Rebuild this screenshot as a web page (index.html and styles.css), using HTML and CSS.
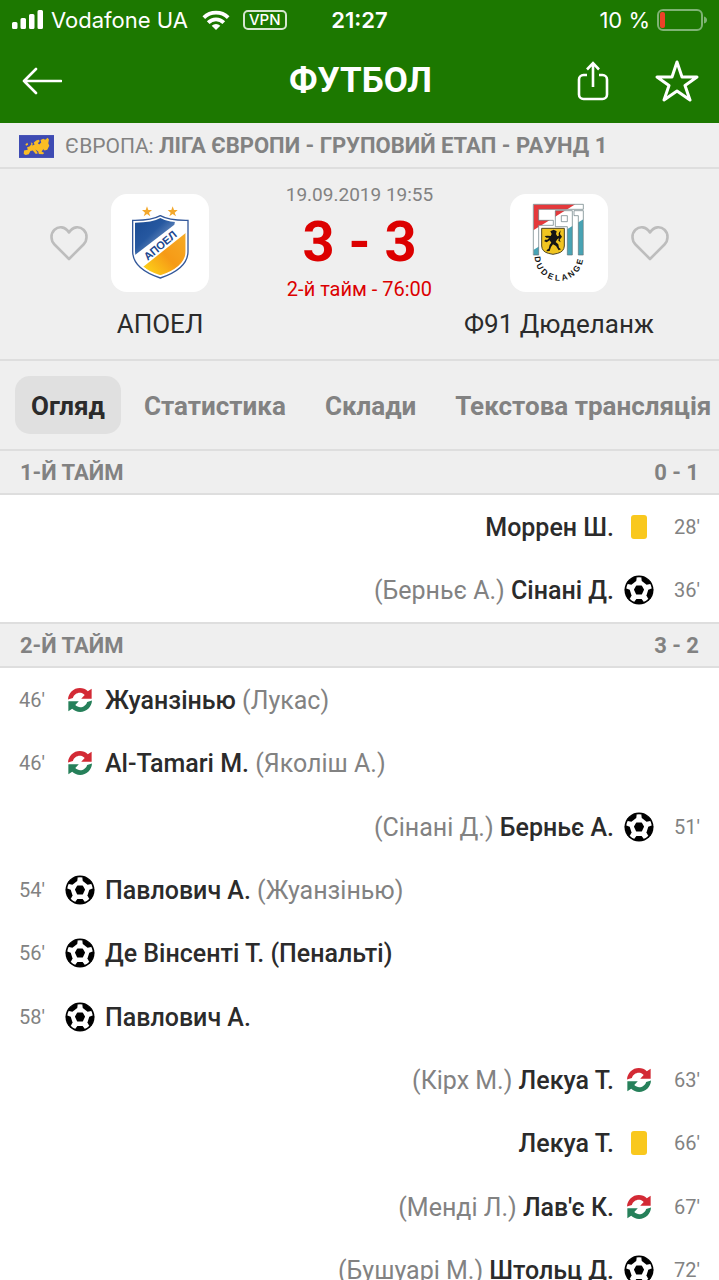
FILE: index.html
```html
<!DOCTYPE html>
<html lang="uk">
<head>
<meta charset="utf-8">
<meta name="viewport" content="width=device-width, initial-scale=1">
<title>Футбол</title>
<link rel="stylesheet" href="styles.css">
</head>
<body>
<svg class="sprite" aria-hidden="true">
  <symbol id="heart" viewBox="0 0 38 36">
    <path d="M19 34 L4.500 19.500 C.5 15.500 .5 8.500 4.500 4.800 C8.500 1 15 1.200 19 7.500 C23 1.200 29.500 1 33.500 4.800 C37.500 8.500 37.500 15.500 33.500 19.500 Z" fill="none" stroke="currentColor" stroke-width="2.600" stroke-linejoin="round"/>
  </symbol>
  <symbol id="ball" viewBox="-15 -15 30 30">
    <circle r="14.500"/>
    <circle r="12.800" fill="#fff"/>
    <path d="M-2.200 -3.800 H2.200 L4.200 -.3 L2.200 3.800 H-2.200 L-4.200 -.3 Z" stroke="#000" stroke-width="1.600" stroke-linejoin="round"/>
    <path d="M-2.600 9 H2.600 L4.600 11.600 L4 13.800 H-4 L-4.600 11.600 Z"/>
    <path d="M-3 8.800 H3 L5.400 11.400 L5 13.500 H-5 L-5.400 11.400 Z" transform="rotate(72)"/>
    <path d="M-3 8.800 H3 L5.400 11.400 L5 13.500 H-5 L-5.400 11.400 Z" transform="rotate(144)"/>
    <path d="M-3 8.800 H3 L5.400 11.400 L5 13.500 H-5 L-5.400 11.400 Z" transform="rotate(216)"/>
    <path d="M-3 8.800 H3 L5.400 11.400 L5 13.500 H-5 L-5.400 11.400 Z" transform="rotate(288)"/>
  </symbol>
  <symbol id="swap" viewBox="0 0 69 69">
    <path d="M0 33 C1 14 16 0 34 0 C43 0 51 3 57 9 L68 2 V31 H38 L48 20 C36 8 18 15 14 29 Z" fill="#d32a35"/>
    <path d="M0 33 C1 14 16 0 34 0 C43 0 51 3 57 9 L68 2 V31 H38 L48 20 C36 8 18 15 14 29 Z" fill="#26805a" transform="rotate(180 34.500 34.500)"/>
  </symbol>
  <symbol id="card" viewBox="0 0 16 24">
    <rect width="16" height="24" rx="3" fill="#f9c81e"/>
  </symbol>
</svg>

<header class="top">
  <div class="status">
    <div class="carrier">
      <svg class="signal" viewBox="0 0 32 20" aria-hidden="true"><path fill="#fff" d="M2 12h2a1.500 1.500 0 0 1 1.500 1.500v4A1.500 1.500 0 0 1 4 19H1.500A1.500 1.500 0 0 1 0 17.500v-4A1.500 1.500 0 0 1 1.500 12zM10 8h2.500A1.500 1.500 0 0 1 14 9.500v8a1.500 1.500 0 0 1-1.500 1.500H10a1.500 1.500 0 0 1-1.500-1.500v-8A1.500 1.500 0 0 1 10 8zM18.500 4H21a1.500 1.500 0 0 1 1.500 1.500v12A1.500 1.500 0 0 1 21 19h-2.500a1.500 1.500 0 0 1-1.500-1.500v-12A1.500 1.500 0 0 1 18.500 4zM27 0h2.500A1.500 1.500 0 0 1 31 1.500v16a1.500 1.500 0 0 1-1.500 1.500H27a1.500 1.500 0 0 1-1.500-1.500v-16A1.500 1.500 0 0 1 27 0z"/></svg>
      <span>Vodafone UA</span>
      <svg class="wifi" viewBox="0 0 28 20" aria-hidden="true"><path fill="#fff" d="M14 20l-4.300-4.300a6.300 6.300 0 0 1 8.600 0z"/><g fill="none" stroke="#fff" stroke-width="3.800"><path d="M1.800 7.600a17.500 17.500 0 0 1 24.400 0"/><path d="M6.200 12.600a11 11 0 0 1 15.600 0"/></g></svg>
      <span class="vpn">VPN</span>
    </div>
    <time class="clock">21:27</time>
    <div class="power">
      <span>10 %</span>
      <svg class="battery" viewBox="0 0 50 22" aria-hidden="true"><rect x="1" y="1" width="44" height="20" rx="5" fill="none" stroke="#7fb374" stroke-width="2"/><rect x="3" y="3" width="5" height="16" rx="2" fill="#ec4128"/><path d="M47 7.500q3 1 3 3.500t-3 3.500z" fill="#7fb374"/></svg>
    </div>
  </div>
  <div class="bar">
    <button class="icon-btn" aria-label="Назад"><svg class="back" viewBox="0 0 40 28"><path d="M39 14H2M14 2L2 14l12 12" fill="none" stroke="#fff" stroke-width="2.600" stroke-linecap="round" stroke-linejoin="round"/></svg></button>
    <h1>ФУТБОЛ</h1>
    <div class="actions">
      <button class="icon-btn" aria-label="Поділитися"><svg class="share" viewBox="0 0 32 40"><path d="M10 14H6.500A4.500 4.500 0 0 0 2 18.500v15A4.500 4.500 0 0 0 6.500 38h19a4.500 4.500 0 0 0 4.500-4.500v-15a4.500 4.500 0 0 0-4.500-4.500H22M16 26V3M10 8.500L16 2.200l6 6.300" fill="none" stroke="#fff" stroke-width="2.600"/></svg></button>
      <button class="icon-btn" aria-label="До обраного"><svg class="star" viewBox="0 0 44 42"><path d="M22 2L27 17H42L30 25.500L35 40L22 31L9 40L14 25.500L2 17H17Z" fill="none" stroke="#fff" stroke-width="3" stroke-linejoin="round"/></svg></button>
    </div>
  </div>
</header>

<main>
  <section class="league">
    <svg class="flag" viewBox="0 0 104 68" aria-hidden="true"><rect width="104" height="68" fill="#3e4bb3"/><path d="M15 46L26 44L24 36L31 34L37 27L35 21L41 25L39 31L46 29L44 22L51 16L58 14L62 18L56 24L60 28L66 22L64 15L72 11L78 14L85 8L89 13L87 24L90 32L84 44L76 46L72 42L67 49L75 53L71 57L59 56L57 49L49 43L56 54L50 56L41 46L34 47L29 57L20 59L14 56Z" fill="#fabd25"/><path d="M19 27l6-4 2 6-6 3z" fill="#fabd25"/></svg>
    <p>ЄВРОПА: <b>ЛІГА ЄВРОПИ - ГРУПОВИЙ ЕТАП - РАУНД 1</b></p>
  </section>

  <section class="match">
    <div class="team home">
      <button class="icon-btn fav" aria-label="Додати АПОЕЛ"><svg><use href="#heart"/></svg></button>
      <svg class="crest" viewBox="18 12 294 294" aria-hidden="true">
        <defs>
          <linearGradient id="blue" x1="0" y1="0" x2="1" y2="1"><stop offset="0" stop-color="#16468f"/><stop offset=".45" stop-color="#2658a0"/><stop offset=".75" stop-color="#7796c4"/></linearGradient>
          <linearGradient id="gold" x1="1" y1="0" x2="0" y2="1"><stop offset="0" stop-color="#f6ad28"/><stop offset=".5" stop-color="#f69a16"/><stop offset="1" stop-color="#ffe21a"/></linearGradient>
          <clipPath id="shield"><path d="M166 84Q143 98 90 98V184Q91 231 166 256Q241 231 242 184V98Q189 98 166 84Z"/></clipPath>
        </defs>
        <path d="M166 77Q140 92 83 91V185Q84 237 166 264Q248 237 249 185V91Q192 92 166 77Z" fill="#fff" stroke="#33589a" stroke-width="4"/>
        <g clip-path="url(#shield)"><path d="M80 70H215L208 104L85 199Z" fill="url(#blue)"/><path d="M115 230L250 123V270H166Z" fill="url(#gold)"/></g>
        <text class="crest-name" transform="translate(128 213) rotate(-40)">АПОЕЛ</text>
        <path d="M126 49L130 60L141 60L132 68L136 79L126 72L116 79L120 68L111 60L122 60Z" fill="#f3a82c"/>
        <path d="M203 49L207 60L218 60L209 68L213 79L203 72L193 79L197 68L188 60L199 60Z" fill="#f3a82c"/>
      </svg>
      <h2>АПОЕЛ</h2>
    </div>
    <div class="result">
      <time>19.09.2019 19:55</time>
      <strong>3 - 3</strong>
      <span>2-й тайм - 76:00</span>
    </div>
    <div class="team away">
      <svg class="crest" viewBox="18 12 294 294" aria-hidden="true">
        <defs>
          <clipPath id="f91"><path clip-rule="evenodd" d="M88 43H238V58H104V91H148V106H104V195H88ZM154 62H205V195H190V110H154ZM172 77V95H190V77ZM210 62H238V195H223V77H210Z"/></clipPath>
          <path id="arc" d="M92 199A73 73 0 0 0 238 199"/>
        </defs>
        <g clip-path="url(#f91)"><rect x="88" y="43" width="150" height="152" fill="#fff"/><path d="M88 43H214L88 121Z" fill="#e5383b"/><path d="M88 180L238 88V195H88Z" fill="#48a3b4"/></g>
        <path d="M88 43H238V58H104V91H148V106H104V195H88ZM154 62H205V195H190V110H154ZM172 77V95H190V77ZM210 62H238V195H223V77H210Z" fill="none" stroke="#5f7478" stroke-width="2"/>
        <path d="M113 115H181V168Q180 185 161 190L147 193L133 190Q114 185 113 168Z" fill="#f0c420" stroke="#4d4524" stroke-width="3"/>
        <path d="M139 124L149 119L158 124L156 132L160 139L169 136L170 141L160 148L155 156L163 163L165 173L171 178L164 181L156 168L147 163L141 171L137 183L128 184L128 180L134 176L137 164L142 158L137 151L128 157L121 154L123 149L130 149L136 143L127 143L122 138L131 137L140 138L143 132ZM164 130L170 121L168 132L174 140L167 149L170 157L163 152L165 143Z" fill="#151515"/>
        <text class="arc-name"><textPath href="#arc" startOffset="1"><tspan dx="0 7 7 8 8 7 7 7 8">DUDELANGE</tspan></textPath></text>
      </svg>
      <button class="icon-btn fav" aria-label="Додати Ф91 Дюделанж"><svg><use href="#heart"/></svg></button>
      <h2>Ф91 Дюделанж</h2>
    </div>
  </section>

  <nav class="tabs">
    <button class="tab active">Огляд</button>
    <button class="tab">Статистика</button>
    <button class="tab">Склади</button>
    <button class="tab">Текстова трансляція</button>
  </nav>

  <section>
    <h3 class="period"><span>1-Й ТАЙМ</span><span>0 - 1</span></h3>
    <ul class="events">
      <li class="guest"><time>28'</time><svg class="ico card"><use href="#card"/></svg><p><b>Моррен Ш.</b></p></li>
      <li class="guest"><time>36'</time><svg class="ico"><use href="#ball"/></svg><p>(Берньє А.) <b>Сінані Д.</b></p></li>
    </ul>
  </section>
  <section>
    <h3 class="period second"><span>2-Й ТАЙМ</span><span>3 - 2</span></h3>
    <ul class="events">
      <li><time>46'</time><svg class="ico swap"><use href="#swap"/></svg><p><b>Жуанзінью</b> (Лукас)</p></li>
      <li><time>46'</time><svg class="ico swap"><use href="#swap"/></svg><p><b>Al-Tamari M.</b> (Яколіш А.)</p></li>
      <li class="guest"><time>51'</time><svg class="ico"><use href="#ball"/></svg><p>(Сінані Д.) <b>Берньє А.</b></p></li>
      <li><time>54'</time><svg class="ico"><use href="#ball"/></svg><p><b>Павлович А.</b> (Жуанзінью)</p></li>
      <li><time>56'</time><svg class="ico"><use href="#ball"/></svg><p><b>Де Вінсенті Т. (Пенальті)</b></p></li>
      <li><time>58'</time><svg class="ico"><use href="#ball"/></svg><p><b>Павлович А.</b></p></li>
      <li class="guest"><time>63'</time><svg class="ico swap"><use href="#swap"/></svg><p>(Кірх М.) <b>Лекуа Т.</b></p></li>
      <li class="guest"><time>66'</time><svg class="ico card"><use href="#card"/></svg><p><b>Лекуа Т.</b></p></li>
      <li class="guest"><time>67'</time><svg class="ico swap"><use href="#swap"/></svg><p>(Менді Л.) <b>Лав'є К.</b></p></li>
      <li class="guest"><time>72'</time><svg class="ico"><use href="#ball"/></svg><p>(Бушуарі М.) <b>Штольц Д.</b></p></li>
    </ul>
  </section>
</main>
</body>
</html>
```
FILE: styles.css
```css
* { box-sizing: border-box; margin: 0; padding: 0; }

body {
  height: 100vh;
  display: flex;
  flex-direction: column;
  overflow: hidden;
  background: #fff;
  color: #2b2b2b;
  font-family: Roboto, "Noto Sans", sans-serif;
}

.sprite { display: none; }
svg { display: block; flex: none; }
button { border: 0; background: none; font: inherit; color: inherit; }
.icon-btn { display: flex; }

.top { background: #1c7800; color: #fff; }

.status {
  display: grid;
  grid-template-columns: 1fr auto 1fr;
  align-items: center;
  height: 40px;
  padding: 0 12px;
  font: 400 22px/40px Inter, sans-serif;
}
.carrier, .power { display: flex; align-items: center; }
.carrier { gap: 7px; white-space: nowrap; }
.signal { width: 32px; height: 20px; }
.wifi { width: 28px; height: 20px; margin: 0 6px 0 7px; }
.vpn {
  padding: 0 4px;
  border: 2px solid #d5e6cf;
  border-radius: 5px;
  font-size: 15px;
  font-weight: 500;
  line-height: 16px;
}
.clock { font-weight: 600; }
.power { justify-content: flex-end; gap: 7px; }
.battery { width: 50px; height: 22px; }

.bar {
  display: grid;
  grid-template-columns: 1fr auto 1fr;
  align-items: center;
  height: 83px;
  padding: 0 20px 2px 22px;
}
.bar h1 { font-size: 35px; font-weight: 700; line-height: 40px; }
.back { width: 40px; height: 28px; }
.actions { display: flex; align-items: center; justify-content: flex-end; gap: 46px; }
.share { width: 32px; height: 40px; }
.star { width: 44px; height: 42px; }

main { flex: 1; min-height: 0; overflow: hidden; }

.league, .match, .tabs, .period {
  background: #efefef;
  border-bottom: 2px solid #dedede;
}

.league {
  display: flex;
  align-items: center;
  gap: 11px;
  height: 46px;
  padding: 2px 19px 0;
  color: #828282;
  font-size: 21px;
  line-height: 28px;
  white-space: nowrap;
}
.league b { font-size: 22px; }
.flag { width: 35px; height: 23px; }

.match {
  display: flex;
  justify-content: space-between;
  height: 192px;
  padding: 12px 50px 0;
}
.team {
  display: grid;
  grid-template-columns: 38px 98px 38px;
  column-gap: 23px;
  row-gap: 16px;
  align-items: center;
  align-content: start;
  padding-top: 13px;
}
.team h2 {
  grid-column: 1 / -1;
  font-size: 26px;
  font-weight: 400;
  line-height: 32px;
  text-align: center;
}
.away .crest { grid-column: 2; }
.crest { width: 98px; height: 98px; border-radius: 16px; background: #fff; }
.crest-name { font: 700 33px "Liberation Sans", sans-serif; fill: #1d478e; }
.arc-name { font: 700 25px "Liberation Sans", sans-serif; fill: #151515; }
.fav { color: #bdbdbd; }
.fav svg { width: 38px; height: 36px; }

.result {
  display: flex;
  flex-direction: column;
  align-items: center;
  color: #dc0000;
  font-size: 20px;
  line-height: 28px;
  white-space: nowrap;
}
.result time { color: #828282; font-size: 19px; }
.result strong { font-size: 56px; line-height: 66px; }

.tabs {
  display: flex;
  align-items: center;
  gap: 7px;
  height: 90px;
  padding-left: 15px;
  overflow: hidden;
  color: #828282;
}
.tab {
  flex: none;
  height: 58px;
  padding: 2px 16px 0;
  border-radius: 15px;
  font-size: 26px;
  font-weight: 700;
}
.tab.active { background: #e0e0e0; color: #2b2b2b; }

.period {
  display: flex;
  justify-content: space-between;
  height: 44px;
  padding: 0 20px;
  color: #828282;
  font-size: 22px;
  line-height: 44px;
}
.second { height: 46px; border-top: 2px solid #dedede; }

.events { list-style: none; }
.events li {
  display: flex;
  align-items: center;
  height: 63px;
  padding: 0 19px;
  color: #828282;
  font-size: 25px;
  line-height: 32px;
}
.events li:nth-child(3n + 2) { height: 64px; }
.events .guest { flex-direction: row-reverse; }
.events p { padding-top: 2px; }
.events b { color: #2b2b2b; font-weight: 500; }
.events time { width: 46px; font-size: 20px; }
.guest time { text-align: right; }
.ico { width: 30px; height: 30px; margin-right: 10px; }
.guest .ico { margin: 0 0 0 10px; }
.ico.swap, .ico.card { padding: 3px; }
```
